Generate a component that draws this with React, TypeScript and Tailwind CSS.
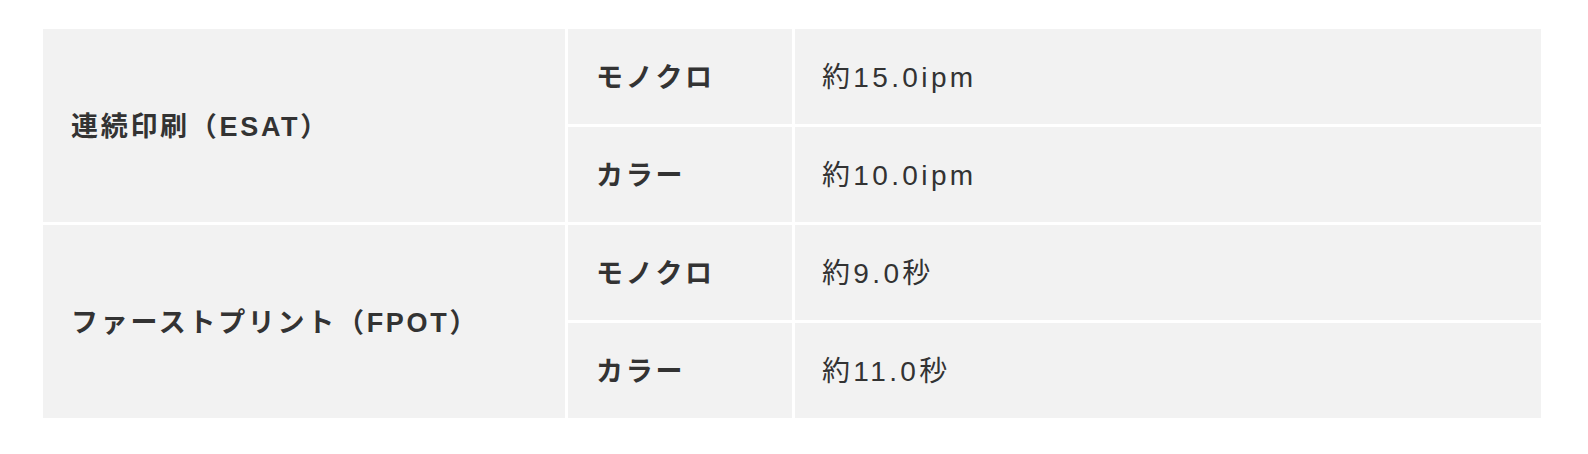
export default function App() {
  const rows = [
    { head: "連続印刷（ESAT）", items: [["モノクロ", "約15.0ipm"], ["カラー", "約10.0ipm"]] },
    { head: "ファーストプリント（FPOT）", items: [["モノクロ", "約9.0秒"], ["カラー", "約11.0秒"]] },
  ];

  return (
    <div
      className="w-full bg-white pt-[29px] pl-[43px] pr-[47px] pb-[36px] text-[#333]"
      style={{ fontFamily: '"Liberation Sans", "Noto Sans CJK JP", sans-serif' }}
    >
      <div className="grid grid-cols-[522px_224px_1fr] auto-rows-[95px] gap-[3px]">
        {rows.map((row) => (
          <>
            <div
              key={row.head}
              className="row-span-2 flex items-center bg-[#f2f2f2] pl-[28px] pt-[4px] text-[27px] font-bold tracking-[0.1em]"
            >
              {row.head}
            </div>
            {row.items.map(([label, value], i) => (
              <>
                <div
                  key={row.head + label}
                  className={`${i === 1 ? "col-start-2" : ""} flex items-center bg-[#f2f2f2] pl-[28px] pt-[3px] text-[27px] font-bold tracking-[0.1em]`}
                >
                  {label}
                </div>
                <div
                  key={row.head + value}
                  className="flex items-center bg-[#f2f2f2] pl-[27px] pt-[3px] text-[28px] tracking-[0.12em]"
                >
                  {value}
                </div>
              </>
            ))}
          </>
        ))}
      </div>
    </div>
  );
}
